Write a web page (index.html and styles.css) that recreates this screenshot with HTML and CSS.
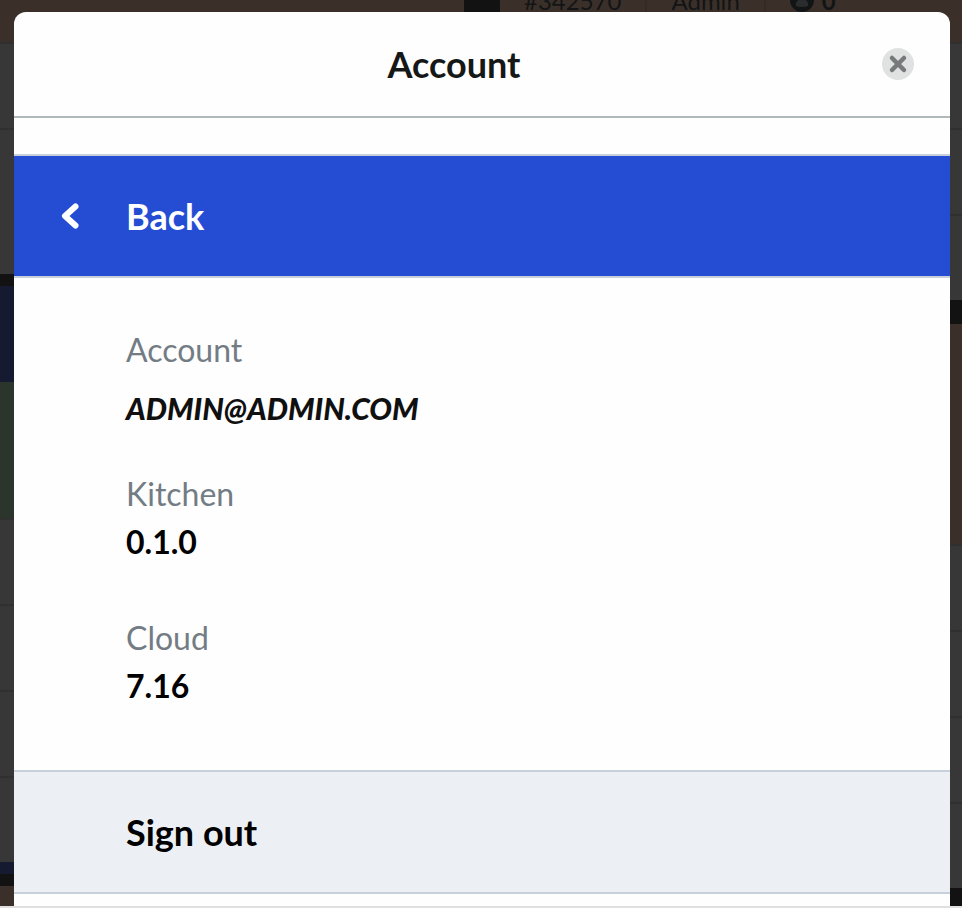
FILE: index.html
```
<!DOCTYPE html>
<html lang="en">
<head>
  <meta charset="UTF-8">
  <meta name="viewport" content="width=device-width, initial-scale=1">
  <title>Account</title>
  <link rel="stylesheet" href="styles.css">
</head>
<body>

  <div class="page">
    <!-- Kitchen board behind the dialog -->
    <div class="board" aria-hidden="true">
      <div class="column">
        <div class="ticket-head"></div>
        <div class="item"></div>
        <div class="item last tall"></div>
        <div class="gap"></div>
        <div class="bar navy large"></div>
        <div class="bar green"></div>
        <div class="item"></div>
        <div class="item"></div>
        <div class="item"></div>
        <div class="item last"></div>
        <div class="bar navy"></div>
        <div class="gap"></div>
        <div class="ticket-head"></div>
      </div>
      <div class="column">
        <div class="ticket-head">
          <span class="cell">#342570</span>
          <span class="cell">Admin</span>
          <span class="cell">
            <svg class="person" viewBox="0 0 24 24">
              <circle cx="12" cy="12" r="12" fill="#121416"/>
              <circle cx="12" cy="9" r="4" fill="#2b2c2e"/>
              <path d="M6 18v-2c0-3 3-5 6-5s6 2 6 5v2q-6 2-12 0z" fill="#2b2c2e"/>
            </svg>
            <b>0</b>
          </span>
        </div>
        <div class="item"></div>
        <div class="item"></div>
        <div class="item last"></div>
        <div class="gap wide"></div>
        <div class="ticket-head full"></div>
        <div class="item"></div>
        <div class="item"></div>
        <div class="item"></div>
        <div class="item last"></div>
        <div class="gap wide"></div>
      </div>
    </div>

    <div class="modal" role="dialog" aria-labelledby="title">
      <header class="modal-header">
        <h1 id="title">Account</h1>
        <button class="close" type="button" aria-label="Close">
          <svg viewBox="0 0 32 32">
            <circle cx="16" cy="16" r="16" fill="#e0e2e2"/>
            <path d="M10 10l12 12M22 10l-12 12" stroke="#777a7a" stroke-width="4.500" stroke-linecap="round"/>
          </svg>
        </button>
      </header>

      <button class="row back" type="button">
        <svg class="chevron" viewBox="0 0 20 28">
          <path d="M15.500 4.500L5 14l10.500 9.500" fill="none" stroke="#fff" stroke-width="6" stroke-linecap="round" stroke-linejoin="round"/>
        </svg>
        Back
      </button>

      <dl class="details">
        <dt>Account</dt>
        <dd class="email">ADMIN@ADMIN.COM</dd>
        <dt>Kitchen</dt>
        <dd>0.1.0</dd>
        <dt>Cloud</dt>
        <dd>7.16</dd>
      </dl>

      <button class="row sign-out" type="button">Sign out</button>
    </div>
  </div>

</body>
</html>
```
FILE: styles.css
```
* {
  box-sizing: border-box;
}

body {
  margin: 0;
  background: #121212;
  color: #000;
  font-family: Lato, sans-serif;
}

.page {
  position: relative;
  min-height: 100vh;
  padding: 12px 12px 0 14px;
  border-bottom: 2px solid #e0e0e0;
}

/* board */
.board {
  position: absolute;
  inset: 0;
  display: grid;
  grid-template-columns: 464px 1fr;
  gap: 36px;
  overflow: hidden;
  background: #121212;
}

.column {
  margin-top: -42px;
}

.ticket-head {
  display: flex;
  height: 86px;
  border-bottom: 2px solid #303030;
  background: #3a3029;
  color: #121416;
  font-size: 24px;
}

.ticket-head.full {
  height: 222px;
}

.cell {
  display: flex;
  align-items: center;
  gap: 8px;
  padding: 0 24px;
  border-right: 2px solid #352b26;
}

.cell:last-child {
  border-right: none;
}

.person {
  width: 24px;
  height: 24px;
}

.item {
  height: 86px;
  border-bottom: 2px solid #303030;
  background: #373737;
}

.item.last {
  height: 84px;
  border-bottom: none;
}

.item.tall {
  height: 144px;
}

.gap {
  height: 12px;
  background: #121212;
}

.gap.wide {
  height: 24px;
}

.bar {
  height: 12px;
}

.navy {
  background: #151a30;
}

.navy.large {
  height: 96px;
}

.green {
  height: 138px;
  border-bottom: 2px solid #303030;
  background: #2b352c;
}

/* dialog */
.modal {
  position: relative;
  padding-bottom: 12px;
  border-radius: 12px 12px 0 0;
  background: #fefefe;
}

.modal-header {
  display: flex;
  align-items: center;
  gap: 24px;
  height: 106px;
  padding: 0 36px;
  border-bottom: 2px solid #b1b8b9;
}

.modal-header h1 {
  flex: 1;
  margin: 0;
  color: #161818;
  font-size: 36px;
  line-height: 48px;
  text-align: center;
}

.close {
  width: 32px;
  height: 32px;
  padding: 0;
  border: none;
  background: none;
  cursor: pointer;
}

.close svg,
.chevron {
  display: block;
}

.row {
  display: flex;
  align-items: center;
  width: 100%;
  height: 124px;
  padding: 0 46px;
  border: solid #c8d0d9;
  border-width: 2px 0;
  font-family: inherit;
  font-size: 36px;
  font-weight: bold;
  line-height: 48px;
  cursor: pointer;
}

.back {
  gap: 46px;
  margin-top: 36px;
  background: #244dd4;
  color: #fff;
}

.chevron {
  width: 20px;
  height: 28px;
}

.details {
  margin: 0;
  padding: 48px 112px 12px;
  font-size: 32px;
  line-height: 48px;
}

.details dt {
  color: #737c84;
}

.details dd {
  margin: 0 0 48px;
  font-weight: bold;
}

.details .email {
  margin-bottom: 28px;
  color: #101010;
  font-size: 30px;
  font-style: italic;
  font-weight: 900;
  line-height: 68px;
}

.sign-out {
  padding-left: 112px;
  background: #ecf0f5;
  color: #000;
}
```
